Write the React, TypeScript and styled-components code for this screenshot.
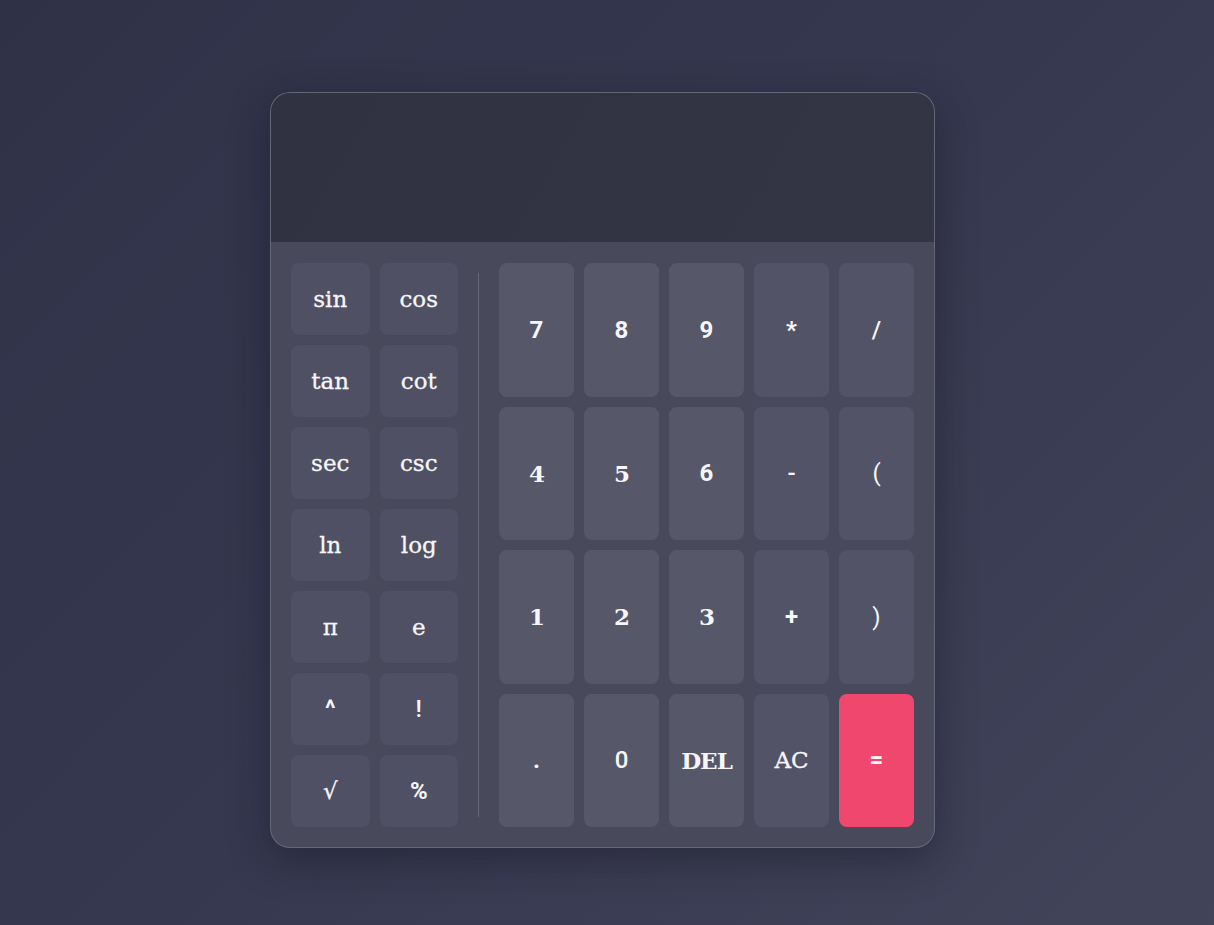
import React from "react";
import styled, { createGlobalStyle } from "styled-components";

const Global = createGlobalStyle`
  html, body { margin: 0; padding: 0; }
  body {
    min-height: 925px;
    background: linear-gradient(135deg, #2f3247 0%, #363850 50%, #42445a 100%);
    font-family: "DejaVu Serif", serif;
  }
`;

const Page = styled.div`
  display: flex;
  align-items: flex-start;
  padding: 92px 0 0 270px;
  min-height: 925px;
  box-sizing: border-box;
`;

const Card = styled.div`
  width: 665px;
  border-radius: 20px;
  border: 1px solid rgba(255, 255, 255, 0.16);
  overflow: hidden;
  background: #484a5c;
  box-shadow: 0 12px 40px rgba(20, 21, 32, 0.45);
  box-sizing: border-box;
`;

const Display = styled.div`
  height: 149px;
  background: linear-gradient(120deg, #303241 0%, #333545 100%);
`;

const Keypad = styled.div`
  display: flex;
  padding: 21px 20px 20px 20px;
  gap: 20px;
`;

const FnGrid = styled.div`
  display: grid;
  grid-template-columns: repeat(2, 78.5px);
  grid-auto-rows: 72px;
  gap: 10px;
`;

const Divider = styled.div`
  width: 1px;
  margin: 10px 0;
  background: rgba(255, 255, 255, 0.16);
`;

const NumGrid = styled.div`
  display: grid;
  grid-template-columns: repeat(5, 75px);
  grid-template-rows: repeat(4, 133.5px);
  gap: 10px;
`;

type Kind = "fn" | "num" | "op" | "eq";

const Key = styled.button<{ $kind: Kind; $sans?: boolean; $weight?: number }>`
  border: none;
  border-radius: 8px;
  display: flex;
  align-items: center;
  justify-content: center;
  padding: 0;
  color: #f6f6f8;
  cursor: pointer;
  font-family: ${(p) =>
    p.$sans ? "Roboto, 'Liberation Sans', sans-serif" : "'DejaVu Serif', serif"};
  font-size: ${(p) => (p.$sans ? "24px" : "23px")};
  font-weight: ${(p) => p.$weight ?? 400};
  letter-spacing: ${(p) => (!p.$sans && (p.$weight ?? 400) >= 700 ? "-1px" : "0")};
  -webkit-text-stroke: ${(p) => (!p.$sans && (p.$weight ?? 400) < 700 ? "0.3px #f6f6f8" : "0")};
  background: ${(p) =>
    p.$kind === "eq"
      ? "#f0476f"
      : p.$kind === "num"
      ? "#565769"
      : p.$kind === "op"
      ? "#525366"
      : "#4f5063"};
`;

const fnKeys: { t: string; sans?: boolean; w?: number }[] = [
  { t: "sin" }, { t: "cos" },
  { t: "tan" }, { t: "cot" },
  { t: "sec" }, { t: "csc" },
  { t: "ln" }, { t: "log" },
  { t: "π" }, { t: "e" },
  { t: "^", sans: true, w: 700 }, { t: "!", sans: true, w: 500 },
  { t: "√" }, { t: "%", sans: true, w: 700 },
];

const numKeys: { t: string; k: Kind; sans?: boolean; w?: number }[] = [
  { t: "7", k: "num", sans: true, w: 700 },
  { t: "8", k: "num", sans: true, w: 700 },
  { t: "9", k: "num", sans: true, w: 700 },
  { t: "*", k: "op", sans: true, w: 700 },
  { t: "/", k: "op", sans: true, w: 500 },
  { t: "4", k: "num", w: 700 },
  { t: "5", k: "num", w: 700 },
  { t: "6", k: "num", sans: true, w: 700 },
  { t: "-", k: "op", sans: true, w: 500 },
  { t: "(", k: "op", sans: true, w: 400 },
  { t: "1", k: "num", w: 700 },
  { t: "2", k: "num", w: 700 },
  { t: "3", k: "num", w: 700 },
  { t: "+", k: "op", sans: true, w: 700 },
  { t: ")", k: "op", sans: true, w: 400 },
  { t: ".", k: "num", sans: true, w: 700 },
  { t: "0", k: "num", sans: true, w: 500 },
  { t: "DEL", k: "num", w: 700 },
  { t: "AC", k: "op", w: 400 },
  { t: "=", k: "eq", sans: true, w: 700 },
];

export default function App() {
  return (
    <>
      <Global />
      <Page>
        <Card>
          <Display />
          <Keypad>
            <FnGrid>
              {fnKeys.map((k) => (
                <Key key={k.t} $kind="fn" $sans={k.sans} $weight={k.w}>
                  {k.t}
                </Key>
              ))}
            </FnGrid>
            <Divider />
            <NumGrid>
              {numKeys.map((k) => (
                <Key key={k.t} $kind={k.k} $sans={k.sans} $weight={k.w}>
                  {k.t}
                </Key>
              ))}
            </NumGrid>
          </Keypad>
        </Card>
      </Page>
    </>
  );
}
